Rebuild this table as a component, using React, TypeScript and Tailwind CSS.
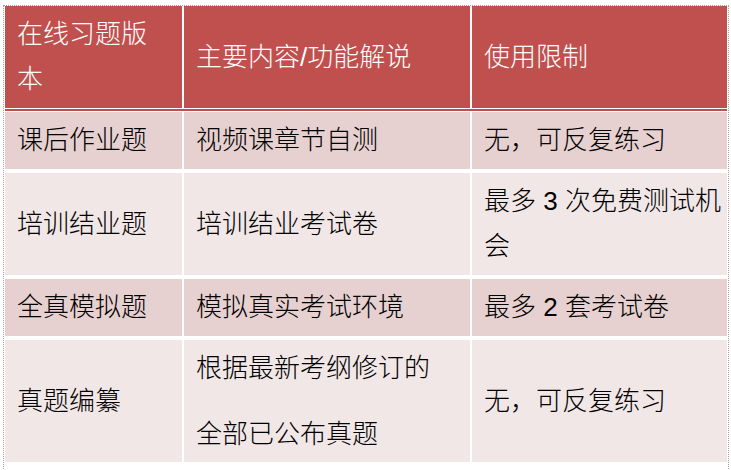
import React from "react";

const font = { fontFamily: '"Liberation Sans", "Noto Sans CJK SC", sans-serif' };

function Cell({ lines, bg, white, gapClass }: { lines: string[]; bg: string; white?: boolean; gapClass?: string }) {
  return (
    <div className={`${bg} flex flex-col justify-center pl-3 pr-1 ${gapClass ?? ""}`}>
      {lines.map((l, i) => (
        <div key={i} className={`whitespace-pre leading-[45px] text-[26px] font-light ${white ? "text-white" : "text-black"}`}>
          {l}
        </div>
      ))}
    </div>
  );
}

export default function App() {
  const odd = "bg-[#e7d0d0]";
  const even = "bg-[#f2e7e7]";
  const head = "bg-[#c0504d]";
  return (
    <div className="w-[731px] h-[470px] bg-white overflow-hidden" style={font}>
      <div className="ml-[3px] mt-[5px] w-[726px] h-[480px] border-l border-t border-r border-dotted border-[#a0a0a0] pl-[1px]">
        <div className="grid grid-cols-[177px_286px_255px] gap-x-[2px] h-[102px]">
          <Cell bg={head} white lines={["在线习题版", "本"]} />
          <Cell bg={head} white lines={["主要内容/功能解说"]} />
          <Cell bg={head} white lines={["使用限制"]} />
        </div>
        <div className="h-[1px]" />
        <div className="h-[2px] w-[722px] bg-[#c0504d]" />
        <div className="h-[1px]" />
        <div className="grid grid-cols-[177px_286px_255px] grid-rows-[57px_102px_57px_122px] gap-x-[2px] gap-y-[4px]">
          <Cell bg={odd} lines={["课后作业题"]} />
          <Cell bg={odd} lines={["视频课章节自测"]} />
          <Cell bg={odd} lines={["无，可反复练习"]} />

          <Cell bg={even} lines={["培训结业题"]} />
          <Cell bg={even} lines={["培训结业考试卷"]} />
          <Cell bg={even} lines={["最多 3 次免费测试机", "会"]} />

          <Cell bg={odd} lines={["全真模拟题"]} />
          <Cell bg={odd} lines={["模拟真实考试环境"]} />
          <Cell bg={odd} lines={["最多 2 套考试卷"]} />

          <Cell bg={even} lines={["真题编纂"]} />
          <Cell bg={even} gapClass="gap-[21px]" lines={["根据最新考纲修订的", "全部已公布真题"]} />
          <Cell bg={even} lines={["无，可反复练习"]} />
        </div>
      </div>
    </div>
  );
}
